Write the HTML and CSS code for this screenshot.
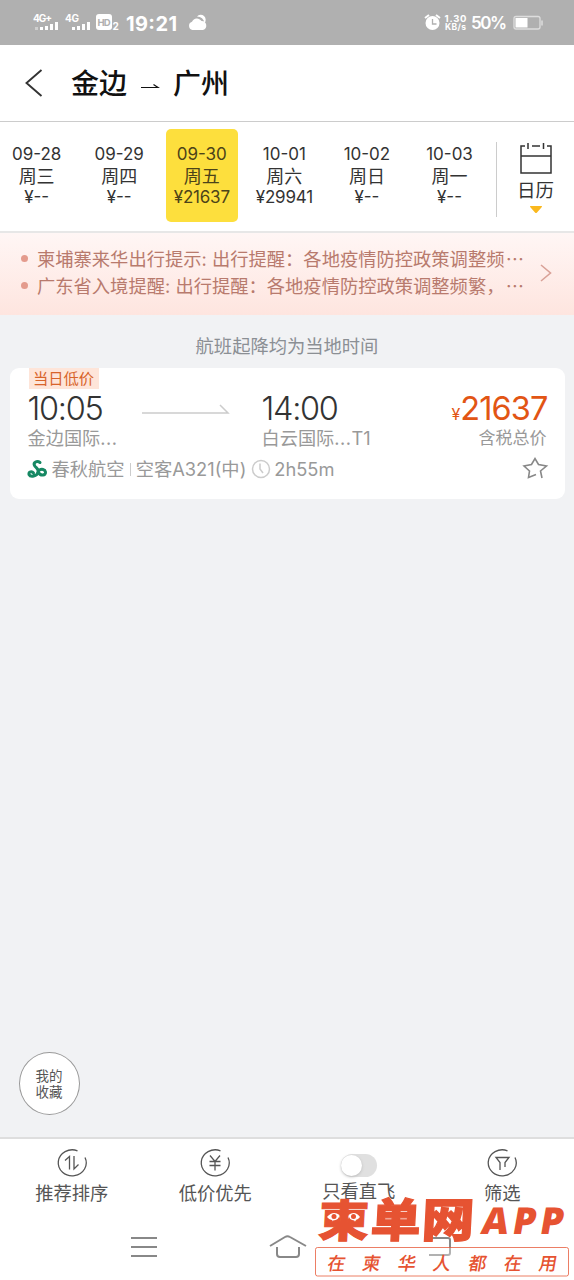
FILE: index.html
```html
<!DOCTYPE html>
<html lang="zh-CN">
<head>
<meta charset="utf-8">
<title>金边 → 广州</title>
<link rel="stylesheet" href="styles.css">
</head>
<body>
<div class="screen">
  <div class="status">
    <svg class="status-left" width="180" height="24" viewBox="0 0 180 24">
      <g fill="#fff">
        <text x="0" y="11" font-size="10" font-weight="700" textLength="19">4G+</text>
        <text x="32" y="11" font-size="10" font-weight="700" textLength="14">4G</text>
        <rect x="2" y="16" width="3" height="3" opacity=".4"/>
        <path d="M7 16h3v3H7zM12 15h3v4h-3zM17 13h3v6h-3zM22 11h3v8h-3zM39 16h3v3h-3zM44 15h3v4h-3zM49 13h3v6h-3zM54 11h3v8h-3z"/>
        <rect x="63" y="3" width="16" height="16" rx="3"/>
        <text x="79.500" y="19" font-size="10" font-weight="700">2</text>
        <text x="93" y="20" font-size="20" font-weight="700" textLength="51">19:21</text>
        <path d="M159.500 19a4.300 4.300 0 0 1-.5-8.300a5.500 5.500 0 0 1 9.500-.7a4.600 4.600 0 0 1 1.500 9zM164 5.500a4.500 4.500 0 0 1 7.500 6.500a8 8 0 0 0-7.500-6.500z"/>
      </g>
      <text x="64.500" y="14.500" font-size="9.500" font-weight="700" fill="#b0b0b0" textLength="13">HD</text>
    </svg>
    <svg class="status-right" width="120" height="24" viewBox="0 0 120 24">
      <g fill="#fff">
        <circle cx="8.500" cy="12" r="7"/>
        <path d="M1 7l4-3M12 4l4 3" stroke="#fff" stroke-width="2"/>
        <text x="20.500" y="10.500" font-size="9.500" font-weight="700" textLength="22">1.30</text>
        <text x="21" y="19" font-size="8.500" font-weight="700" textLength="21">KB/s</text>
        <text x="47" y="18" font-size="17" font-weight="600" textLength="36">50%</text>
        <rect x="91.500" y="7" width="12" height="9.500"/>
      </g>
      <path d="M8.500 8v5h4" fill="none" stroke="#b0b0b0" stroke-width="1.300"/>
      <rect x="90" y="5.500" width="26" height="12.500" rx="2" fill="none" stroke="#ddd" stroke-width="1.300"/>
      <path d="M118 9.500v5" stroke="#ddd" stroke-width="1.500"/>
    </svg>
  </div>

  <header class="header">
    <svg class="back" width="18" height="30" viewBox="0 0 18 30"><path d="M16.500 2L1.500 15L16.500 28" fill="none" stroke="#333" stroke-width="1.900"/></svg>
    <h1>金边</h1>
    <svg class="head-arrow" width="18" height="8" viewBox="0 0 18 8"><path d="M0 5.500H17L12.500 2.500" fill="none" stroke="#111" stroke-width="1.200"/></svg>
    <h1>广州</h1>
  </header>

  <nav class="dates">
    <div class="day"><span class="date">09-28</span><b>周三</b><span>¥--</span></div>
    <div class="day"><span class="date">09-29</span><b>周四</b><span>¥--</span></div>
    <div class="day active"><span class="date">09-30</span><b>周五</b><span class="sum">¥21637</span></div>
    <div class="day"><span class="date">10-01</span><b>周六</b><span class="sum">¥29941</span></div>
    <div class="day"><span class="date">10-02</span><b>周日</b><span>¥--</span></div>
    <div class="day"><span class="date">10-03</span><b>周一</b><span>¥--</span></div>
    <div class="calendar">
      <svg width="34" height="34" viewBox="0 0 34 34"><path d="M6 4H2V31H32V4H28M13 4H21M2 14H32M9 1V7M24.500 1V7" fill="none" stroke="#333" stroke-width="1.500"/></svg>
      <b>日历</b>
      <svg class="drop" width="14" height="9" viewBox="0 0 14 9"><path d="M1 1H13Q13 2 12 3L8 7.500Q7 8.500 6 7.500L2 3Q1 2 1 1Z" fill="#fab81e"/></svg>
    </div>
  </nav>

  <section class="notice">
    <div class="lines">
      <p><i></i><span>柬埔寨来华出行提示: 出行提醒：各地疫情防控政策调整频</span><em>⋯</em></p>
      <p><i></i><span>广东省入境提醒: 出行提醒：各地疫情防控政策调整频繁，</span><em>⋯</em></p>
    </div>
    <svg width="12" height="18" viewBox="0 0 12 18"><path d="M1 1L10.500 9L1 17" fill="none" stroke="#d9a197" stroke-width="1.600"/></svg>
  </section>

  <main class="results">
    <p class="hint">航班起降均为当地时间</p>
    <article class="card">
      <span class="tag">当日低价</span>
      <div class="flight">
        <div class="from"><strong>10:05</strong><small>金边国际<span class="dots">...</span></small></div>
        <svg class="route" width="88" height="12" viewBox="0 0 88 12"><path d="M0 10H86L78 2" fill="none" stroke="#ccc" stroke-width="1.500"/></svg>
        <div class="to"><strong>14:00</strong><small>白云国际<span class="dots">...</span>T1</small></div>
        <div class="price"><strong><sub>¥</sub>21637</strong><small>含税总价</small></div>
      </div>
      <div class="info">
        <svg width="20" height="20" viewBox="0 0 20 20"><g fill="none" stroke="#168863" stroke-width="3" stroke-linecap="round" stroke-linejoin="round"><path d="M13 3.500C10 1.200 6 3.500 7.500 6.500C8.500 9 12 9.500 11 13C10 17.500 3.500 18.500 2 15.500C1.500 12.500 5 12 6.500 14"/><path d="M11.500 13.500C13.500 17.500 19 16.500 18.500 13C18 10 14.500 9.800 12.500 11"/></g></svg>
        <span class="airline">春秋航空</span><i></i><span class="plane">空客A321(中)</span>
        <svg class="clock" width="20" height="20" viewBox="0 0 20 20"><g fill="none" stroke="#ccc" stroke-width="1.500"><circle cx="10" cy="10" r="8.500"/><path d="M9 4.500V10L12 14"/></g></svg>
        <span class="duration">2h55m</span>
        <svg class="star" width="26" height="24" viewBox="0 0 26 24"><path d="M14 17.500L6.500 20.500L7.500 14L2 9L9.500 7.500L13 1.500L16.500 7.500L24.500 9L18.500 14L20 21" fill="none" stroke="#888" stroke-width="1.600"/></svg>
      </div>
    </article>
    <button class="favorites"><span>我的</span><span>收藏</span></button>
  </main>

  <footer class="filters">
    <div class="filter">
      <svg width="30" height="28" viewBox="0 0 30 28"><g fill="none" stroke="#555" stroke-width="1.300"><path d="M20.500 1.800A14 13 0 1 0 28 8.500"/><path d="M8 11.500L12.500 7.500V20.500M17 7V20L21.500 15.500"/></g></svg>
      <span>推荐排序</span>
    </div>
    <div class="filter">
      <svg width="30" height="28" viewBox="0 0 30 28"><g fill="none" stroke="#555" stroke-width="1.300"><path d="M20.500 1.800A14 13 0 1 0 28 8.500"/><path d="M10 6.500L15 12.500L20 6.500M9.500 12.500H20.500M9.500 16.500H20.500M15 12.500V21.500"/></g></svg>
      <span>低价优先</span>
    </div>
    <div class="filter direct">
      <div class="toggle"></div>
      <span>只看直飞</span>
    </div>
    <div class="filter">
      <svg width="30" height="28" viewBox="0 0 30 28"><g fill="none" stroke="#555" stroke-width="1.300"><path d="M20.500 1.800A14 13 0 1 0 28 8.500"/><path d="M13 21V13.500L9 8.500H22L18 13.500V18"/></g></svg>
      <span>筛选</span>
    </div>
  </footer>
  <div class="system">
    <svg width="28" height="24" viewBox="0 0 28 24"><path d="M1 3H27M1 12H27M1 21H27" stroke="#888" stroke-width="2"/></svg>
    <svg width="38" height="26" viewBox="0 0 38 26"><path d="M1 12L16 3Q18.500 1.500 21 3L37 12M8 13V20Q8 23 11 23H27Q30 23 30 20V13" fill="none" stroke="#888" stroke-width="2"/></svg>
    <svg width="24" height="20" viewBox="0 0 24 20"><path d="M1 1H20Q22 1 22 3V16Q22 18 20 18H1" fill="none" stroke="#888" stroke-width="2"/></svg>
  </div>

  <svg class="brand" width="264" height="92" viewBox="0 0 264 92">
    <g fill="#e65332" font-family="'Noto Sans CJK SC', sans-serif">
      <g font-size="50" font-weight="900" stroke="#e65332" stroke-width="1.300">
        <text transform="translate(8 50) skewX(-3) scale(1 .88)">柬</text>
        <text transform="translate(60 50) skewX(-3) scale(1 .93)">单</text>
        <text transform="translate(111 50) skewX(-3) scale(1.050 .93)">网</text>
      </g>
      <path d="M17 30Q23 23 29.500 28Q29 33 23 33.500Q19 33 17 30ZM38.500 28Q45 23 50 30Q48 33 44.500 33.500Q39 33 38.500 28Z" fill="#fff"/>
      <circle cx="24" cy="29.500" r="2.500"/><circle cx="43.500" cy="29.500" r="2.500"/>
      <text class="latin" transform="translate(170 47) skewX(-10)" font-size="37" font-weight="800" textLength="82">APP</text>
      <rect x="5.500" y="60.500" width="253" height="28.500" rx="2" fill="#fff" fill-opacity=".35" stroke="#e65332" stroke-opacity=".75"/>
      <g font-size="18" font-weight="500">
        <text transform="translate(16.500 82.500) skewX(-10)">在</text>
        <text transform="translate(51.500 82.500) skewX(-10)">柬</text>
        <text transform="translate(87 82.500) skewX(-10)">华</text>
        <text transform="translate(122 82.500) skewX(-10)">人</text>
        <text transform="translate(157.500 82.500) skewX(-10)">都</text>
        <text transform="translate(193 82.500) skewX(-10)">在</text>
        <text transform="translate(228 82.500) skewX(-10)">用</text>
      </g>
    </g>
  </svg>
</div>
</body>
</html>
```
FILE: styles.css
```css
* { box-sizing: border-box; }
body { margin: 0; }
h1, p { margin: 0; }
b, i, em, strong, small { font-weight: inherit; font-style: normal; }
svg { display: block; flex: none; overflow: visible; }

.screen {
  position: relative;
  display: flex;
  flex-direction: column;
  width: 574px;
  height: 1280px;
  overflow: hidden;
  background: #fff;
  color: #333;
  font-family: Inter, "Noto Sans CJK SC", sans-serif;
  white-space: nowrap;
}

.status {
  display: flex;
  justify-content: space-between;
  height: 45px;
  padding: 11px 30px 0 33px;
  background: #b0b0b0;
}

.header {
  display: flex;
  align-items: center;
  height: 77px;
  padding-left: 25px;
  border-bottom: 1px solid #ccc;
}
.header h1 {
  width: 57px;
  padding-top: 1px;
  color: #111;
  font-size: 28px;
  font-weight: 500;
  line-height: 40px;
}
.back { margin-right: 28px; }
.head-arrow { margin: 5px 14px 0 13px; }

.dates {
  display: flex;
  height: 109px;
  padding-top: 7px;
}
.day {
  display: flex;
  flex-direction: column;
  align-items: center;
  width: 72px;
  height: 93px;
  margin-right: 10.700px;
  padding-top: 15px;
  border-radius: 5px;
  font-size: 17px;
  line-height: 21.500px;
}
.day:first-child { margin-left: .700px; }
.day b, .calendar b { font-size: 18px; }
.day .sum { letter-spacing: -.2px; }
.active { background: #fddf3d; color: #4c4319; }
.calendar {
  display: flex;
  flex-direction: column;
  align-items: center;
  width: 78px;
  height: 75px;
  margin-top: 13px;
  border-left: 1px solid #ccc;
}
.calendar b { margin-top: 2px; line-height: 25px; font-size: 18.500px; }
.drop { margin-top: 2px; }

.notice {
  display: flex;
  justify-content: space-between;
  align-items: center;
  height: 84px;
  padding: 0 22px 2px 21px;
  border-top: 2px solid #e7e7e7;
  background: linear-gradient(#fff6f5, #fee5df);
  color: #b87a6d;
}
.lines { width: 503px; }
.notice p {
  display: flex;
  align-items: center;
  height: 27px;
  font-size: 18.300px;
  line-height: 27px;
}
.notice i { width: 7px; height: 7px; margin: -2px 9px 0 0; border-radius: 50%; background: #e49b8d; }
.notice em { margin-left: auto; }

.results {
  flex: 1;
  position: relative;
  padding: 18px 9.500px 0;
  background: #f1f2f4;
}
.hint {
  color: #8b8f94;
  font-size: 18.300px;
  line-height: 26px;
  text-align: center;
}
.card {
  height: 131px;
  margin-top: 9px;
  padding: 0 17px 0 18px;
  border-radius: 9px;
  background: #fff;
}
.tag {
  display: block;
  width: 70px;
  height: 21px;
  margin-left: 1px;
  background: #fee5d9;
  color: #d8642b;
  font-size: 15.300px;
  line-height: 22px;
  text-align: center;
}
.flight { display: flex; height: 68px; }
.flight strong {
  display: block;
  height: 37px;
  font-size: 32.500px;
  font-weight: 300;
  line-height: 39px;
}
.flight small { display: block; color: #999; font-size: 18.200px; line-height: 24px; }
.dots { letter-spacing: .5px; }
.from { width: 114px; }
.from strong, .to strong { letter-spacing: -1.300px; }
.route { margin-top: 14px; }
.to { margin-left: 32px; }
.price { margin-left: auto; text-align: right; }
.price strong { color: #e25514; letter-spacing: -.900px; font-weight: 400; }
.price sub { margin-right: 1px; font-size: 16px; vertical-align: baseline; }
.price small { margin-right: 1px; font-size: 17px; }
.info {
  display: flex;
  align-items: center;
  height: 25px;
  margin-left: -1px;
  color: #999;
  font-size: 18.300px;
  line-height: 25px;
}
.info > svg { position: relative; top: -1px; }
.airline { margin-left: 5px; }
.info i { width: 1px; height: 13px; margin: 0 5px; background: #ccc; }
.clock { margin: 0 3px 0 5px; }
.star { margin-left: auto; }

.favorites {
  position: absolute;
  left: 19px;
  bottom: 22px;
  display: flex;
  flex-direction: column;
  align-items: center;
  justify-content: center;
  width: 61px;
  height: 63px;
  padding: 0 1px 2px 0;
  border: 1.500px solid #999;
  border-radius: 50%;
  background: #fff;
  color: #555;
  font: 13.500px/16px "Noto Sans CJK SC", sans-serif;
}

.filters {
  display: flex;
  height: 81px;
  padding-top: 10px;
  border-top: 2px solid #dedede;
}
.filter {
  display: flex;
  flex-direction: column;
  align-items: center;
  width: 143.500px;
  color: #555;
  font-size: 18.300px;
  line-height: 28px;
}
.filter span { margin-top: 2px; }
.toggle {
  width: 36px;
  height: 23px;
  margin-top: 5px;
  border-radius: 12px;
  background: #e0e0e0;
}
.toggle::before {
  content: "";
  display: block;
  width: 21px;
  height: 21px;
  margin-top: 1px;
  border-radius: 50%;
  background: #fff;
  box-shadow: 0 1px 3px #bbb;
}
.direct span { margin-top: 0; }

.system {
  display: flex;
  align-items: center;
  gap: 111px;
  height: 62px;
  padding: 0 0 5px 130px;
}
.system svg:nth-child(2) { margin: 0 10px 0 0; }
.brand { position: absolute; left: 310px; top: 1187px; }
.latin { font-family: "Open Sans", "Noto Sans", sans-serif; }
```
